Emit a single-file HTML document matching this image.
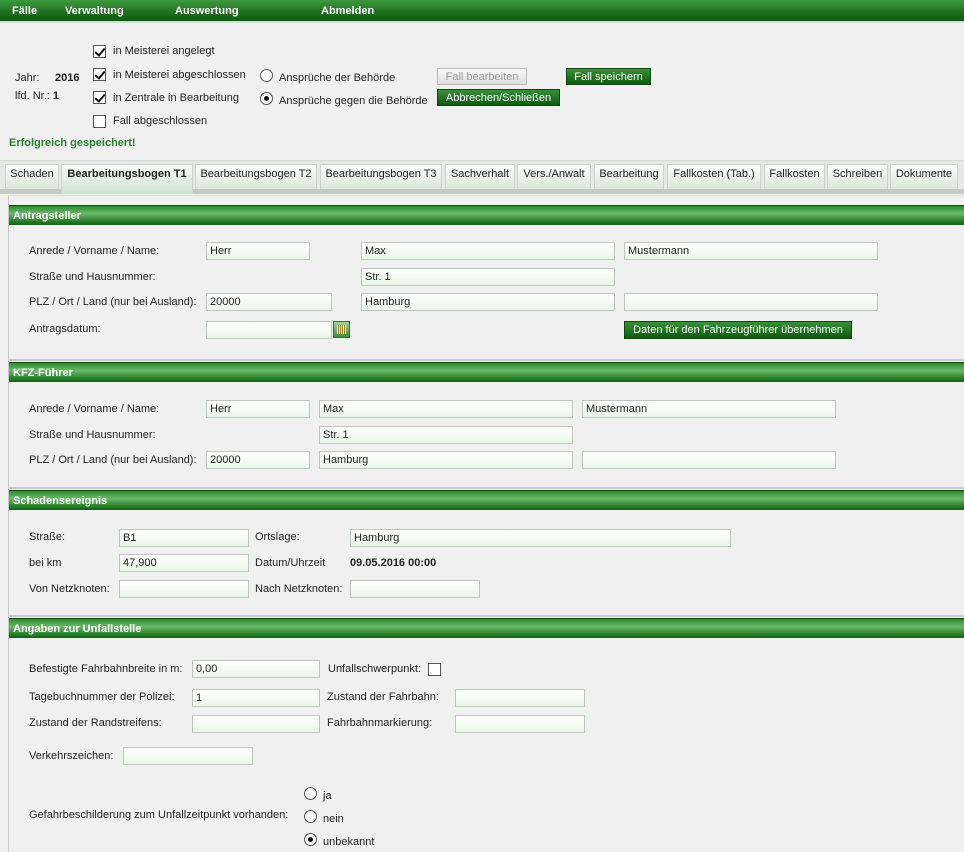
<!DOCTYPE html>
<html><head><meta charset="utf-8">
<style>
*{box-sizing:border-box;margin:0;padding:0}
body{width:964px;height:852px;overflow:hidden;background:#f0f0f0;font-family:"Liberation Sans",Arial,sans-serif;font-size:11px;color:#222;position:relative}
.a{position:absolute;white-space:nowrap}
.nav{position:absolute;left:0;top:0;width:964px;height:23px;background:linear-gradient(#3d9a3d,#1d6e1d 60%,#0f5a10);border-bottom:2px solid #cfe0cf}
.nav span{position:absolute;top:5px;color:#fff;font-weight:bold;font-size:11px}
.cb{position:absolute;width:13px;height:13px;border:1px solid #555;background:#fff}
.cb.c::after{content:"";position:absolute;left:3px;top:0px;width:4px;height:8px;border:solid #111;border-width:0 2px 2px 0;transform:rotate(40deg)}
.rd{position:absolute;width:13px;height:13px;border:1px solid #555;border-radius:50%;background:#fff}
.rd.c::after{content:"";position:absolute;left:3px;top:3px;width:5px;height:5px;border-radius:50%;background:#111}
.btn{position:absolute;height:17px;color:#fff;font-size:11px;text-align:center;line-height:16px;background:linear-gradient(#3a8f3a,#0e5a10);border:1px solid #0a4a0a}
.btn.d{background:linear-gradient(#fafafa,#dcdcdc);color:#999;border:1px solid #bbb}
.tabbar{position:absolute;left:0;top:160px;width:964px;height:33px;background:#e4ebe4;border-top:1px solid #cfdccf}
.tabbar .g{position:absolute;left:0;top:28px;width:964px;height:5px;background:#c6cac6}
.tab{position:absolute;top:3px;height:25px;border:1px solid #c9d3c9;border-bottom:none;background:linear-gradient(#fbfdfb,#d9e8d9);text-align:center;line-height:18px;font-size:11px;color:#222}
.tab.act{font-weight:bold;height:30px;background:linear-gradient(#f6fbf6,#cfe3cf)}
.panel{position:absolute;left:8px;top:195px;width:956px;height:657px;border-left:1px solid #c8c8c8;border-top:1px solid #cfe3cf}
.hd{position:absolute;left:9px;width:955px;height:20px;background:linear-gradient(#2c8a2c,#6cb86c 40%,#2a7e2a 80%,#175e17);color:#fff;font-weight:bold;font-size:11px;padding:4px 0 0 4px;border-top:1px solid #0f5010}
.sep{position:absolute;left:9px;width:955px;height:2px;background:#c8c8c8}
.in{position:absolute;height:18px;border:1px solid #bfc5bf;background:linear-gradient(#fff,#eaf6ea);padding:2px 0 0 3px;font-size:11px;color:#222}
.b{font-weight:bold}
</style></head><body>
<div class="nav"><span style="left:12px">Fälle</span><span style="left:65px">Verwaltung</span><span style="left:175px">Auswertung</span><span style="left:321px">Abmelden</span></div>

<div class="a" style="left:15px;top:72px">Jahr:</div><div class="a b" style="left:55px;top:72px">2016</div>
<div class="a" style="left:15px;top:90px">lfd. Nr.: <b>1</b></div>
<div class="cb c" style="left:93px;top:45px"></div><div class="a" style="left:113px;top:45px">in Meisterei angelegt</div>
<div class="cb c" style="left:93px;top:68px"></div><div class="a" style="left:113px;top:69px">in Meisterei abgeschlossen</div>
<div class="cb c" style="left:93px;top:91px"></div><div class="a" style="left:113px;top:92px">in Zentrale in Bearbeitung</div>
<div class="cb" style="left:93px;top:115px"></div><div class="a" style="left:113px;top:115px">Fall abgeschlossen</div>
<div class="rd" style="left:260px;top:69px"></div><div class="a" style="left:279px;top:72px">Ansprüche der Behörde</div>
<div class="rd c" style="left:260px;top:92px"></div><div class="a" style="left:279px;top:95px">Ansprüche gegen die Behörde</div>
<div class="btn d" style="left:437px;top:68px;width:90px">Fall bearbeiten</div>
<div class="btn" style="left:566px;top:68px;width:85px">Fall speichern</div>
<div class="btn" style="left:437px;top:89px;width:123px">Abbrechen/Schließen</div>
<div class="a b" style="left:9px;top:137px;color:#2e7d2e">Erfolgreich gespeichert!</div>

<div class="tabbar"><div class="g"></div>
<div class="tab" style="left:5px;width:54px">Schaden</div>
<div class="tab act" style="left:61px;width:132px">Bearbeitungsbogen T1</div>
<div class="tab" style="left:195px;width:122px">Bearbeitungsbogen T2</div>
<div class="tab" style="left:320px;width:122px">Bearbeitungsbogen T3</div>
<div class="tab" style="left:445px;width:70px">Sachverhalt</div>
<div class="tab" style="left:517px;width:74px">Vers./Anwalt</div>
<div class="tab" style="left:594px;width:70px">Bearbeitung</div>
<div class="tab" style="left:667px;width:94px">Fallkosten (Tab.)</div>
<div class="tab" style="left:764px;width:61px">Fallkosten</div>
<div class="tab" style="left:827px;width:61px">Schreiben</div>
<div class="tab" style="left:890px;width:68px">Dokumente</div>
</div>

<div class="panel"></div>
<div class="hd" style="top:205px">Antragsteller</div>
<div class="a" style="left:29px;top:245px">Anrede / Vorname / Name:</div>
<div class="in" style="left:206px;top:242px;width:104px">Herr</div>
<div class="in" style="left:361px;top:242px;width:254px">Max</div>
<div class="in" style="left:624px;top:242px;width:254px">Mustermann</div>
<div class="a" style="left:29px;top:271px">Straße und Hausnummer:</div>
<div class="in" style="left:361px;top:268px;width:254px">Str. 1</div>
<div class="a" style="left:29px;top:296px">PLZ / Ort / Land (nur bei Ausland):</div>
<div class="in" style="left:206px;top:293px;width:126px">20000</div>
<div class="in" style="left:361px;top:293px;width:254px">Hamburg</div>
<div class="in" style="left:624px;top:293px;width:254px"></div>
<div class="a" style="left:29px;top:323px">Antragsdatum:</div>
<div class="in" style="left:206px;top:321px;width:126px"></div>
<div style="position:absolute;left:333px;top:321px;width:17px;height:17px;border:1px solid #3a6a3a;background:linear-gradient(#9fd49f,#3e8f3e);padding:3px"><div style="width:9px;height:9px;background:repeating-linear-gradient(90deg,#fff3a0 0 1px,#a08020 1px 2px)"></div></div>
<div class="btn" style="left:624px;top:321px;width:228px;height:18px">Daten für den Fahrzeugführer übernehmen</div>

<div class="sep" style="top:359px"></div>
<div class="hd" style="top:362px">KFZ-Führer</div>
<div class="a" style="left:29px;top:403px">Anrede / Vorname / Name:</div>
<div class="in" style="left:206px;top:400px;width:104px">Herr</div>
<div class="in" style="left:319px;top:400px;width:254px">Max</div>
<div class="in" style="left:582px;top:400px;width:254px">Mustermann</div>
<div class="a" style="left:29px;top:429px">Straße und Hausnummer:</div>
<div class="in" style="left:319px;top:426px;width:254px">Str. 1</div>
<div class="a" style="left:29px;top:454px">PLZ / Ort / Land (nur bei Ausland):</div>
<div class="in" style="left:206px;top:451px;width:104px">20000</div>
<div class="in" style="left:319px;top:451px;width:254px">Hamburg</div>
<div class="in" style="left:582px;top:451px;width:254px"></div>

<div class="sep" style="top:487px"></div>
<div class="hd" style="top:490px">Schadensereignis</div>
<div class="a" style="left:29px;top:531px">Straße:</div>
<div class="in" style="left:119px;top:529px;width:130px">B1</div>
<div class="a" style="left:255px;top:531px">Ortslage:</div>
<div class="in" style="left:350px;top:529px;width:381px">Hamburg</div>
<div class="a" style="left:29px;top:557px">bei km</div>
<div class="in" style="left:119px;top:554px;width:130px">47,900</div>
<div class="a" style="left:255px;top:557px">Datum/Uhrzeit</div>
<div class="a b" style="left:350px;top:557px">09.05.2016 00:00</div>
<div class="a" style="left:29px;top:583px">Von Netzknoten:</div>
<div class="in" style="left:119px;top:580px;width:130px"></div>
<div class="a" style="left:255px;top:583px">Nach Netzknoten:</div>
<div class="in" style="left:350px;top:580px;width:130px"></div>

<div class="sep" style="top:615px"></div>
<div class="hd" style="top:618px">Angaben zur Unfallstelle</div>
<div class="a" style="left:29px;top:663px">Befestigte Fahrbahnbreite in m:</div>
<div class="in" style="left:192px;top:660px;width:128px">0,00</div>
<div class="a" style="left:328px;top:663px">Unfallschwerpunkt:</div>
<div class="cb" style="left:428px;top:663px"></div>
<div class="a" style="left:29px;top:691px">Tagebuchnummer der Polizei:</div>
<div class="in" style="left:192px;top:689px;width:128px">1</div>
<div class="a" style="left:327px;top:691px">Zustand der Fahrbahn:</div>
<div class="in" style="left:455px;top:689px;width:130px"></div>
<div class="a" style="left:29px;top:717px">Zustand der Randstreifens:</div>
<div class="in" style="left:192px;top:715px;width:128px"></div>
<div class="a" style="left:327px;top:717px">Fahrbahnmarkierung:</div>
<div class="in" style="left:455px;top:715px;width:130px"></div>
<div class="a" style="left:29px;top:750px">Verkehrszeichen:</div>
<div class="in" style="left:123px;top:747px;width:130px"></div>
<div class="a" style="left:29px;top:809px">Gefahrbeschilderung zum Unfallzeitpunkt vorhanden:</div>
<div class="rd" style="left:304px;top:787px"></div><div class="a" style="left:323px;top:790px">ja</div>
<div class="rd" style="left:304px;top:810px"></div><div class="a" style="left:323px;top:813px">nein</div>
<div class="rd c" style="left:304px;top:833px"></div><div class="a" style="left:323px;top:836px">unbekannt</div>
</body></html>
